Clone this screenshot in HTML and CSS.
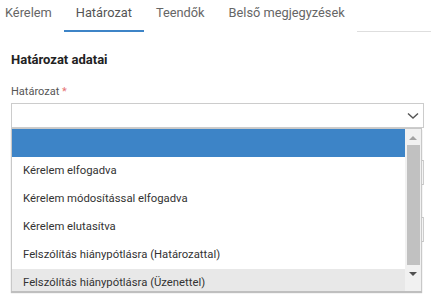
FILE: index.html
```html
<!DOCTYPE html>
<html lang="hu">

<head>
    <meta charset="UTF-8">
    <meta name="viewport" content="width=device-width, initial-scale=1.0">
    <title>Határozat</title>
    <link rel="stylesheet" href="styles.css">
</head>

<body>

    <!-- Tab bar -->
    <div class="tabs">
        <div class="tab">Kérelem</div>
        <div class="tab active">Határozat</div>
        <div class="tab">Teendők</div>
        <div class="tab">Belső megjegyzések</div>
    </div>

    <div class="panel">
        <div class="section-title">Határozat adatai</div>

        <div class="field">
            <div class="field-label">Határozat <span class="req">*</span></div>
            <div class="select-wrap">
                <div class="select-box">
                    <svg class="chevron" width="12" height="8" viewBox="0 0 12 8">
                        <path d="M1 1.5 L6 6 L11 1.5" fill="none" stroke="#555" stroke-width="1.4" />
                    </svg>
                </div>

                <!-- Open dropdown list -->
                <div class="dropdown">
                    <ul class="options">
                        <li class="option selected">&nbsp;</li>
                        <li class="option">Kérelem elfogadva</li>
                        <li class="option">Kérelem módosítással elfogadva</li>
                        <li class="option">Kérelem elutasítva</li>
                        <li class="option">Felszólítás hiánypótlásra (Határozattal)</li>
                        <li class="option hover">Felszólítás hiánypótlásra (Üzenettel)</li>
                    </ul>
                    <div class="scrollbar">
                        <span class="arrow up"></span>
                        <span class="thumb"></span>
                        <span class="arrow down"></span>
                    </div>
                </div>
            </div>
        </div>

        <!-- Fields hidden under the open list (only their right edge shows) -->
        <div class="field">
            <div class="field-label blank"></div>
            <div class="select-box"></div>
        </div>
        <div class="field">
            <div class="field-label blank"></div>
            <div class="select-box"></div>
        </div>
    </div>

</body>

</html>
```

FILE: styles.css
```css
/* Reset */
* {
    margin: 0;
    padding: 0;
    box-sizing: border-box;
}

html,
body {
    min-height: 100vh;
}

body {
    background: #fff;
    font-family: Roboto, "Liberation Sans", sans-serif;
    color: #333;
}

/* Tab bar */
.tabs {
    display: flex;
    height: 32px;
    margin-left: -7px;
    border-bottom: 1px solid #dedede;
}

.tab {
    height: 32px;
    margin-bottom: -1px;
    padding: 0 12px;
    line-height: 25px;
    font-size: 12.8px;
    color: #666;
    background: #fff;
    border-bottom: 2px solid #fff;
}

.tab.active {
    color: #555;
    border-bottom-color: #3d84c7;
}

/* Panel content */
.panel {
    padding: 18px 7px 0 11px;
}

.section-title {
    font-size: 13px;
    font-weight: bold;
    color: #222;
    line-height: 20px;
    margin-bottom: 15px;
}

.field {
    margin-bottom: 14px;
}

.field-label {
    font-size: 11px;
    color: #555;
    line-height: 14px;
    margin-bottom: 4px;
}

.field-label.blank {
    height: 14px;
}

.req {
    color: #e57373;
}

.select-wrap {
    position: relative;
}

.select-box {
    height: 25px;
    border: 1px solid #ccc;
    display: flex;
    justify-content: flex-end;
    align-items: center;
    padding-right: 4px;
}

/* Dropdown list laid over the page */
.dropdown {
    position: absolute;
    top: 25px;
    left: 0;
    width: 411px;
    height: 163px;
    display: flex;
    background: #fff;
    border-top: 1px solid #c8c8c8;
    border-left: 1px solid #c8c8c8;
    border-right: 1px solid #c8c8c8;
    box-shadow: 0 2px 1px rgba(0, 0, 0, 0.25);
    overflow: hidden;
}

.options {
    list-style: none;
    flex: 1;
}

.option {
    height: 28px;
    line-height: 28px;
    padding-left: 11px;
    font-size: 11.3px;
    color: #333;
    white-space: nowrap;
}

.option.selected {
    background: #3d84c7;
}

.option.hover {
    background: #e8e8e8;
}

/* Scrollbar */
.scrollbar {
    width: 16px;
    background: #f1f1f1;
    display: flex;
    flex-direction: column;
    align-items: center;
}

.arrow {
    width: 0;
    height: 0;
    border-left: 4px solid transparent;
    border-right: 4px solid transparent;
}

.arrow.up {
    margin: 7px 0 5px;
    border-bottom: 4px solid #a3a3a3;
}

.arrow.down {
    margin: 7px 0 0;
    border-top: 4px solid #505050;
}

.thumb {
    width: 13px;
    height: 120px;
    background: #c1c1c1;
}
```
